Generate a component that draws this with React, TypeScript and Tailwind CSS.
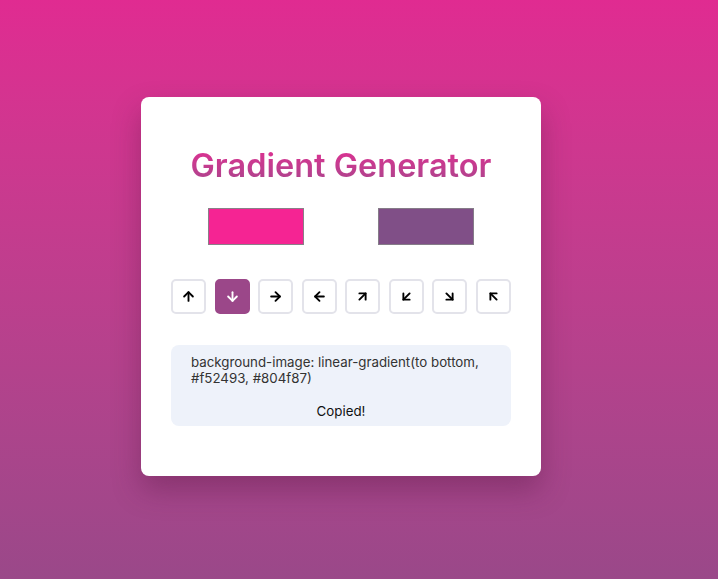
import {
  ArrowUp,
  ArrowDown,
  ArrowRight,
  ArrowLeft,
  ArrowUpRight,
  ArrowDownLeft,
  ArrowDownRight,
  ArrowUpLeft,
} from 'lucide-react';

const directions = [
  { name: 'to top', icon: ArrowUp },
  { name: 'to bottom', icon: ArrowDown },
  { name: 'to right', icon: ArrowRight },
  { name: 'to left', icon: ArrowLeft },
  { name: 'to top right', icon: ArrowUpRight },
  { name: 'to bottom left', icon: ArrowDownLeft },
  { name: 'to bottom right', icon: ArrowDownRight },
  { name: 'to top left', icon: ArrowUpLeft },
];

export default function App() {
  const active = 'to bottom';

  return (
    <div
      className="flex h-[579px] w-full items-start justify-center bg-gradient-to-b from-[#e02b91] to-[#9a4889] pr-[36px] pt-[97px]"
      style={{ fontFamily: 'Inter, "Noto Sans", sans-serif' }}
    >
      <div className="flex w-[400px] flex-col rounded-lg bg-white px-[30px] pb-[50px] pt-[48px] shadow-[0_14px_28px_rgba(80,20,60,0.35)]">
        <h1 className="bg-gradient-to-b from-[#e32a92] to-[#a4458c] bg-clip-text text-center text-[32.5px] font-semibold leading-[42px] text-transparent">
          Gradient Generator
        </h1>

        <div className="mt-[21px] flex justify-around">
          <div className="h-[37px] w-[96px] border border-[#8a7f88] bg-[#f52493]" />
          <div className="h-[37px] w-[96px] border border-[#857c88] bg-[#804f87]" />
        </div>

        <div className="mt-[34px] flex justify-between">
          {directions.map((d) => {
            const isActive = d.name === active;
            return (
              <button
                key={d.name}
                className={
                  isActive
                    ? 'flex h-[35px] w-[35px] items-center justify-center rounded-[5px] border-2 border-[#9b4789] bg-[#9b4789] text-white'
                    : 'flex h-[35px] w-[35px] items-center justify-center rounded-[5px] border-2 border-[#e3e3ea] bg-white text-black'
                }
              >
                <d.icon size={15} strokeWidth={3} />
              </button>
            );
          })}
        </div>

        <div className="mt-[31px] flex flex-col rounded-lg bg-[#eef2fa] px-5 pb-[7px] pt-[9px] text-[13.3px] leading-[16px] text-[#333]">
          <p>background-image: linear-gradient(to bottom, #f52493, #804f87)</p>
          <p className="mt-[17px] text-center text-[#111]">Copied!</p>
        </div>
      </div>
    </div>
  );
}
